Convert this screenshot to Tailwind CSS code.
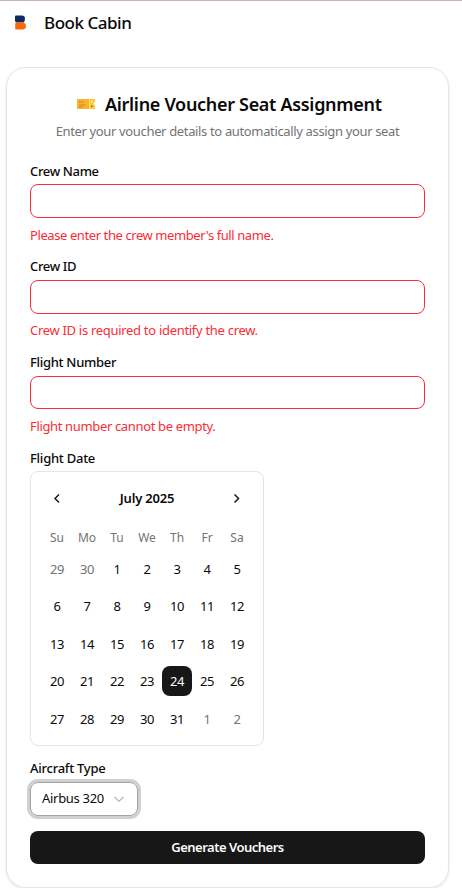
<!DOCTYPE html>
<html lang="en">
<head>
<meta charset="utf-8">
<title>Book Cabin</title>
<script src="https://cdn.jsdelivr.net/npm/@tailwindcss/browser@4"></script>
</head>
<body class="h-[888px] overflow-hidden border-t border-[#c9afb9] bg-white font-['Noto_Sans',sans-serif] text-[13px] text-neutral-950">
<header class="flex h-[44px] items-center pl-[14px]">
  <svg class="h-[16px] w-[14px]" viewBox="0 0 14 16"><path d="M1 1.5Q1 .6 2 .6H8Q11 .8 11 3.7Q11 6.2 9.5 7.4H2.5Q1.2 7.4 1 6Z" fill="#10295f"/><path d="M2.5 7.6H9.5Q12 8.3 12 11Q12 14.3 8.5 14.5H2.5Q1.2 14.5 1.2 13.3V9Q1.2 7.7 2.5 7.6Z" fill="#f9670a"/></svg>
  <h1 class="ml-4 text-[17px] leading-6 font-medium tracking-[-0.48px] whitespace-nowrap">Book Cabin</h1>
</header>
<main class="mt-[22px] ml-[6px] h-[821px] w-[443px] rounded-[20px] border border-neutral-200 px-[23px] shadow-sm">
  <div class="flex h-[28px] mt-[22px] items-center pl-[46px]">
    <svg class="h-[12px] w-[20px]" viewBox="0 0 20 12"><path d="M1 1H19V4Q17.5 4 17.5 5.5T19 7V11H1V7.5Q2 6 1 4.5Z" fill="#fdca32"/><path d="M1 1H13V11H1V7.5Q2 6 1 4.5Z" fill="#f6b52c"/><path d="M3 4H8M3 7H10M3 9H7" stroke="#d98323" stroke-width="1"/><path d="M13.5 1V11" stroke="#ffe36c"/><rect x="15" y="3" width="1.5" height="1.5" fill="#fff0a2"/><rect x="15" y="7.5" width="2" height="1.5" fill="#c96916"/></svg>
    <h2 class="ml-[9px] text-[18px] font-semibold tracking-[-0.31px] whitespace-nowrap">Airline Voucher Seat Assignment</h2>
  </div>
  <p class="mt-[3px] h-[20px] text-center leading-[21px] tracking-[-0.35px] whitespace-nowrap text-neutral-500">Enter your voucher details to automatically assign your seat</p>
  <div class="mt-[18px] h-[95.5px]">
    <label for="name" class="block h-[25px] leading-[24px] font-medium tracking-[-0.35px]">Crew Name</label>
    <input id="name" class="block h-[34px] w-full rounded-[8px] border border-[#fb2c36] px-3">
    <p class="mt-[7px] leading-[20px] tracking-[-0.41px] text-[#fb2c36]">Please enter the crew member's full name.</p>
  </div>
  <div class="h-[96px]">
    <label for="crew" class="block h-[25px] leading-[23px] font-medium tracking-[-0.35px]">Crew ID</label>
    <input id="crew" class="block h-[34px] w-full rounded-[8px] border border-[#fb2c36] px-3">
    <p class="mt-[6.4px] leading-[20px] tracking-[-0.3px] text-[#fb2c36]">Crew ID is required to identify the crew.</p>
  </div>
  <div class="h-[96px]">
    <label for="flight" class="block h-[25px] leading-[23px] font-medium tracking-[-0.3px]">Flight Number</label>
    <input id="flight" class="block h-[33.5px] w-full rounded-[8px] border border-[#fb2c36] px-3">
    <p class="mt-[6.5px] leading-[20px] tracking-[-0.35px] text-[#fb2c36]">Flight number cannot be empty.</p>
  </div>
  <div class="h-[24.5px] leading-[23px] font-medium tracking-[-0.25px]">Flight Date</div>
  <section class="h-[275px] w-[234px] rounded-[8px] border border-neutral-200 px-[11px] pt-[11px]">
    <div class="flex h-[30px] items-center justify-between">
      <svg class="size-[30px]" viewBox="0 0 30 30" fill="none" stroke="#171717" stroke-width="1.5"><path d="M17 11.5L13 15.5L17 19.5"/></svg>
      <span class="pt-[1.5px] font-semibold tracking-[-0.2px]">July 2025</span>
      <svg class="size-[30px]" viewBox="0 0 30 30" fill="none" stroke="#171717" stroke-width="1.5"><path d="M12.5 11.5L16.5 15.5L12.5 19.5"/></svg>
    </div>
    <div class="mt-[15px] grid h-[19px] grid-cols-7 text-center text-[12px] leading-[19px] text-neutral-500"><span>Su</span><span>Mo</span><span>Tu</span><span>We</span><span>Th</span><span>Fr</span><span>Sa</span></div>
    <div id="days" class="mt-[6.9px] grid grid-cols-7 gap-y-[7.5px] text-center leading-[30px] tracking-[-0.5px]"></div>
  </section>
  <div class="h-[36px] pt-[11px] leading-[22px] font-medium tracking-[-0.25px]">Aircraft Type</div>
  <button class="flex h-[34px] w-[108px] items-center rounded-[8px] border border-[#a1a1a1] pl-[11px] tracking-[-0.3px] whitespace-nowrap ring-3 ring-[#a1a1a1]/50">Airbus 320<svg class="ml-auto mr-[12px] h-[8px] w-[12px]" viewBox="0 0 12 8" fill="none" stroke="#b5b5b5" stroke-width="1.2"><path d="M1.5 2L6 6.2L10.5 2"/></svg></button>
  <button class="mt-[15px] h-[33px] w-full rounded-[8px] bg-neutral-900 text-center font-semibold tracking-[-0.5px] text-neutral-50">Generate Vouchers</button>
</main>
<script>
const days = document.getElementById('days');
for (let i = 0; i < 35; i++) {
  const s = document.createElement('span');
  const n = i - 1;
  s.textContent = n < 1 ? 30 + n : n > 31 ? n - 31 : n;
  if (n < 1 || n > 31) s.className = 'text-neutral-500';
  if (n === 24) s.className = 'rounded-[8px] bg-neutral-900 text-neutral-50';
  days.append(s);
}
</script>
</body>
</html>
